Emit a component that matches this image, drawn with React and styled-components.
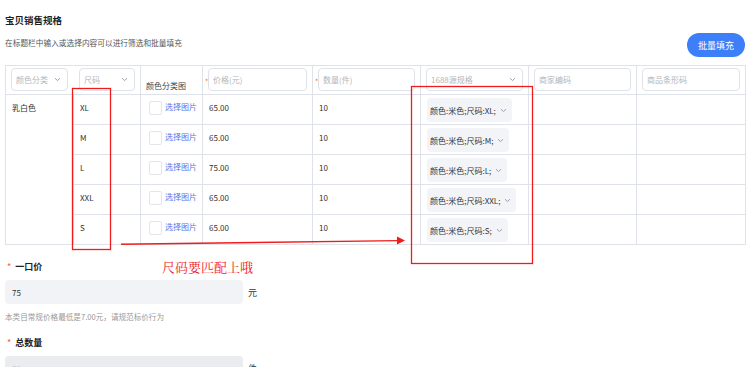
import React from "react";
import styled, { createGlobalStyle } from "styled-components";

const sizes = ["XL", "M", "L", "XXL", "S"];
const prices = ["65.00", "65.00", "75.00", "65.00", "65.00"];

export default function App() {
  return (
    <>
      <GlobalStyle />
      <Page>
        <Title>宝贝销售规格</Title>
        <Toolbar>
          <SubTitle>在标题栏中输入或选择内容可以进行筛选和批量填充</SubTitle>
          <FillButton>批量填充</FillButton>
        </Toolbar>

        <SkuTable>
          <colgroup>
            <col style={{ width: 68 }} />
            <col style={{ width: 67 }} />
            <col style={{ width: 62 }} />
            <col style={{ width: 110 }} />
            <col style={{ width: 108 }} />
            <col style={{ width: 108 }} />
            <col style={{ width: 108 }} />
            <col style={{ width: 109 }} />
          </colgroup>
          <thead>
            <tr>
              <HeadCell $noRight>
                <FilterBox>
                  颜色分类
                  <Chevron />
                </FilterBox>
              </HeadCell>
              <HeadCell>
                <FilterBox>
                  尺码
                  <Chevron />
                </FilterBox>
              </HeadCell>
              <HeadCell>
                <HeadLabel>颜色分类图</HeadLabel>
              </HeadCell>
              <HeadCell $required>
                <FilterBox>价格(元)</FilterBox>
              </HeadCell>
              <HeadCell $required>
                <FilterBox>数量(件)</FilterBox>
              </HeadCell>
              <HeadCell>
                <FilterBox>
                  1688源规格
                  <Chevron />
                </FilterBox>
              </HeadCell>
              <HeadCell>
                <FilterBox>商家编码</FilterBox>
              </HeadCell>
              <HeadCell>
                <FilterBox>商品条形码</FilterBox>
              </HeadCell>
            </tr>
          </thead>
          <tbody>
            {sizes.map((size, i) => (
              <tr key={size}>
                {i === 0 && <Cell rowSpan={5}>乳白色</Cell>}
                <Cell>{size}</Cell>
                <PicCell>
                  <PicPicker>
                    <CheckBox />
                    <PicLink>选择图片</PicLink>
                  </PicPicker>
                </PicCell>
                <Cell>{prices[i]}</Cell>
                <Cell>10</Cell>
                <ChipCell>
                  <SpecChip>
                    颜色:米色;尺码:{size};
                    <Chevron />
                  </SpecChip>
                </ChipCell>
                <Cell />
                <Cell />
              </tr>
            ))}
          </tbody>
        </SkuTable>

        <Field>
          <FieldLabel>一口价</FieldLabel>
          <InputRow>
            <TextBox>75</TextBox>
            <Unit>元</Unit>
          </InputRow>
          <Help>本类目常规价格最低是7.00元，请规范标价行为</Help>
        </Field>

        <Field $gap={15}>
          <FieldLabel>总数量</FieldLabel>
          <InputRow>
            <TextBox $disabled>50</TextBox>
            <Unit>件</Unit>
          </InputRow>
        </Field>

        <Annotations width="750" height="367" viewBox="0 0 750 367">
          <rect x="72.5" y="88.5" width="38" height="161" fill="none" stroke="#f01c1c" strokeWidth="1.3" />
          <rect x="411.5" y="86.5" width="121" height="177" fill="none" stroke="#f01c1c" strokeWidth="1.3" />
          <line x1="121" y1="244.3" x2="398" y2="240.6" stroke="#f01c1c" strokeWidth="1.4" />
          <polygon points="397,236.6 405,240.5 397,244.6" fill="#f01c1c" />
        </Annotations>
        <Note>尺码要匹配上哦</Note>
      </Page>
    </>
  );
}

function Chevron() {
  return (
    <ChevronIcon width="7" height="5" viewBox="0 0 7 5">
      <path d="M1 1.2 L3.5 3.6 L6 1.2" fill="none" stroke="#9aa0aa" strokeWidth="1" />
    </ChevronIcon>
  );
}

const GlobalStyle = createGlobalStyle`
  body {
    margin: 0;
    background: #fff;
    font-family: "Noto Sans CJK SC", "Noto Sans", sans-serif;
    color: #333;
  }
`;

const Page = styled.div`
  position: relative;
  width: 750px;
  height: 367px;
  overflow: hidden;
  padding: 14px 5px 0;
  box-sizing: border-box;
`;

const Title = styled.div`
  font-size: 9.5px;
  line-height: 12px;
  font-weight: 700;
  color: #1f1f1f;
`;

const Toolbar = styled.div`
  display: flex;
  justify-content: space-between;
  align-items: flex-start;
  margin-top: 7px;
`;

const SubTitle = styled.div`
  font-size: 7.7px;
  line-height: 10px;
  color: #555;
  margin-top: 5px;
`;

const FillButton = styled.button`
  height: 24px;
  width: 58px;
  border: none;
  border-radius: 12px;
  background: #3d7ff8;
  color: #fff;
  font-family: inherit;
  font-size: 9px;
  padding: 0;
`;

const SkuTable = styled.table`
  margin-top: 8px;
  width: 740px;
  table-layout: fixed;
  border-collapse: collapse;
  border: 1px solid #dfe2e8;
`;

const HeadCell = styled.th`
  position: relative;
  height: 28px;
  padding: 2px 5px 3px;
  box-sizing: border-box;
  font-weight: 400;
  text-align: left;
  border-right: 1px solid ${(p) => (p.$noRight ? "transparent" : "#dfe2e8")};
  border-bottom: 1px solid #dfe2e8;
  &::before {
    content: ${(p) => (p.$required ? '"*"' : "none")};
    position: absolute;
    left: 2px;
    top: 10px;
    font-size: 7px;
    color: #ff6a00;
  }
`;

const FilterBox = styled.div`
  display: flex;
  align-items: center;
  justify-content: space-between;
  height: 23px;
  padding: 0 6px 0 4px;
  box-sizing: border-box;
  border: 1px solid #dfe2e8;
  border-radius: 4px;
  font-size: 8px;
  color: #b3b6bd;
  white-space: nowrap;
`;

const HeadLabel = styled.div`
  font-size: 8px;
  color: #444;
  padding-top: 12px;
  white-space: nowrap;
`;

const ChevronIcon = styled.svg`
  flex: none;
  display: block;
`;

const Cell = styled.td`
  height: 30px;
  padding: 7px 6px 0;
  box-sizing: border-box;
  vertical-align: top;
  font-size: 8px;
  line-height: 11px;
  color: #333;
  border: 1px solid #dfe2e8;
`;

const PicCell = styled(Cell)`
  padding: 6px 0 0 8px;
`;

const ChipCell = styled(Cell)`
  padding: 3px 6px 0;
`;

const PicPicker = styled.div`
  display: flex;
  align-items: flex-start;
  gap: 3px;
  white-space: nowrap;
`;

const CheckBox = styled.span`
  flex: none;
  width: 11px;
  height: 12px;
  border: 1px solid #e3e5ea;
  border-radius: 2px;
`;

const PicLink = styled.span`
  color: #5874ef;
  font-size: 8px;
  line-height: 11px;
`;

const SpecChip = styled.div`
  display: inline-flex;
  align-items: center;
  gap: 4px;
  height: 24px;
  padding: 0 5px 0 3px;
  box-sizing: border-box;
  border-radius: 4px;
  background: #f3f4f7;
  font-size: 8px;
  color: #333;
  white-space: nowrap;
`;

const Field = styled.div`
  margin-top: ${(p) => p.$gap ?? 16}px;
`;

const FieldLabel = styled.div`
  font-size: 9px;
  line-height: 12px;
  font-weight: 700;
  color: #1f1f1f;
  &::before {
    content: "*";
    color: #ff5a1f;
    font-weight: 400;
    margin: 0 4px 0 2px;
  }
`;

const InputRow = styled.div`
  display: flex;
  align-items: center;
  gap: 5px;
  margin-top: 7px;
`;

const TextBox = styled.div`
  width: 238px;
  height: 24px;
  padding: 0 7px;
  box-sizing: border-box;
  display: flex;
  align-items: center;
  border-radius: 4px;
  background: ${(p) => (p.$disabled ? "#ebecf0" : "#f2f3f6")};
  color: ${(p) => (p.$disabled ? "#c9cbd1" : "#333")};
  font-size: 8px;
`;

const Unit = styled.span`
  font-size: 9px;
  color: #333;
`;

const Help = styled.div`
  margin-top: 8px;
  font-size: 7.6px;
  line-height: 10px;
  color: #999;
`;

const Annotations = styled.svg`
  position: absolute;
  left: 0;
  top: 0;
  pointer-events: none;
`;

const Note = styled.div`
  position: absolute;
  left: 162px;
  top: 259px;
  font-family: "Noto Serif CJK SC", "Noto Sans CJK SC", serif;
  font-size: 13px;
  line-height: 16px;
  color: #f01c1c;
`;
